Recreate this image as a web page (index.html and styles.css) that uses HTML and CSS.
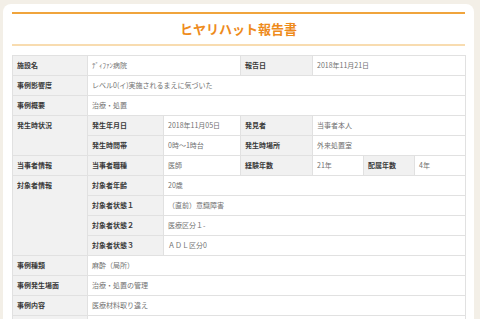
FILE: index.html
```html
<!DOCTYPE html>
<html lang="ja">
<head>
<meta charset="utf-8">
<title>ヒヤリハット報告書</title>
<link rel="stylesheet" href="styles.css">
</head>
<body>
<div class="card">
  <header class="report-head">
    <h1 class="report-title">ヒヤリハット報告書</h1>
  </header>
  <table class="report">
    <colgroup>
      <col class="c1"><col class="c2"><col class="c3"><col class="c4"><col class="c5"><col class="c6"><col class="c7">
    </colgroup>
    <tbody>
      <tr>
        <th>施設名</th>
        <td colspan="2">ﾃﾞｨﾌｧﾝ病院</td>
        <th>報告日</th>
        <td colspan="3">2018年11月21日</td>
      </tr>
      <tr>
        <th>事例影響度</th>
        <td colspan="6">レベル0(イ)実施されるまえに気づいた</td>
      </tr>
      <tr>
        <th>事例概要</th>
        <td colspan="6">治療・処置</td>
      </tr>
      <tr>
        <th rowspan="2">発生時状況</th>
        <th>発生年月日</th>
        <td>2018年11月05日</td>
        <th>発見者</th>
        <td colspan="3">当事者本人</td>
      </tr>
      <tr>
        <th>発生時間帯</th>
        <td>0時～1時台</td>
        <th>発生時場所</th>
        <td colspan="3">外来処置室</td>
      </tr>
      <tr>
        <th>当事者情報</th>
        <th>当事者職種</th>
        <td>医師</td>
        <th>経験年数</th>
        <td>21年</td>
        <th>配属年数</th>
        <td>4年</td>
      </tr>
      <tr>
        <th rowspan="4">対象者情報</th>
        <th>対象者年齢</th>
        <td colspan="5">20歳</td>
      </tr>
      <tr>
        <th>対象者状態１</th>
        <td colspan="5">（直前）意識障害</td>
      </tr>
      <tr>
        <th>対象者状態２</th>
        <td colspan="5">医療区分１-</td>
      </tr>
      <tr>
        <th>対象者状態３</th>
        <td colspan="5">ＡＤＬ区分0</td>
      </tr>
      <tr>
        <th>事例種類</th>
        <td colspan="6">麻酔（局所）</td>
      </tr>
      <tr>
        <th>事例発生場面</th>
        <td colspan="6">治療・処置の管理</td>
      </tr>
      <tr>
        <th>事例内容</th>
        <td colspan="6">医療材料取り違え</td>
      </tr>
      <tr>
        <th></th>
        <td colspan="6"></td>
      </tr>
    </tbody>
  </table>
</div>
</body>
</html>
```
FILE: styles.css
```css
html, body {
  margin: 0;
  padding: 0;
  height: 100%;
  overflow: hidden;
}
body {
  background: #f3efe7;
  font-family: "Noto Sans CJK JP", "Noto Sans", sans-serif;
}
.card {
  margin: 4px 6px 0 3px;
  padding: 8px 9px 20px;
  background: #ffffff;
  border-radius: 8px 8px 0 0;
}
.report-head {
  border-top: 2px solid #f0a43c;
  border-bottom: 2px solid #f8dcb0;
  margin-bottom: 9px;
}
.report-title {
  margin: 0;
  height: 30px;
  line-height: 30px;
  text-align: center;
  font-size: 13px;
  font-weight: bold;
  color: #ee8b1c;
}
.report {
  width: 453px;
  table-layout: fixed;
  border-collapse: collapse;
  font-size: 7px;
}
.c1 { width: 75px; }
.c2 { width: 76px; }
.c3 { width: 77px; }
.c4 { width: 72px; }
.c5 { width: 51px; }
.c6 { width: 51px; }
.c7 { width: 51px; }
.report th,
.report td {
  border: 1px solid #e1e1e1;
  padding: 0 4px;
  height: 19px;
  line-height: 19px;
  vertical-align: top;
  text-align: left;
  white-space: nowrap;
  overflow: hidden;
}
.report th {
  background: #f1f1f1;
  color: #3a3a3a;
  font-weight: bold;
}
.report td {
  background: #ffffff;
  color: #707070;
  font-weight: normal;
}
```
